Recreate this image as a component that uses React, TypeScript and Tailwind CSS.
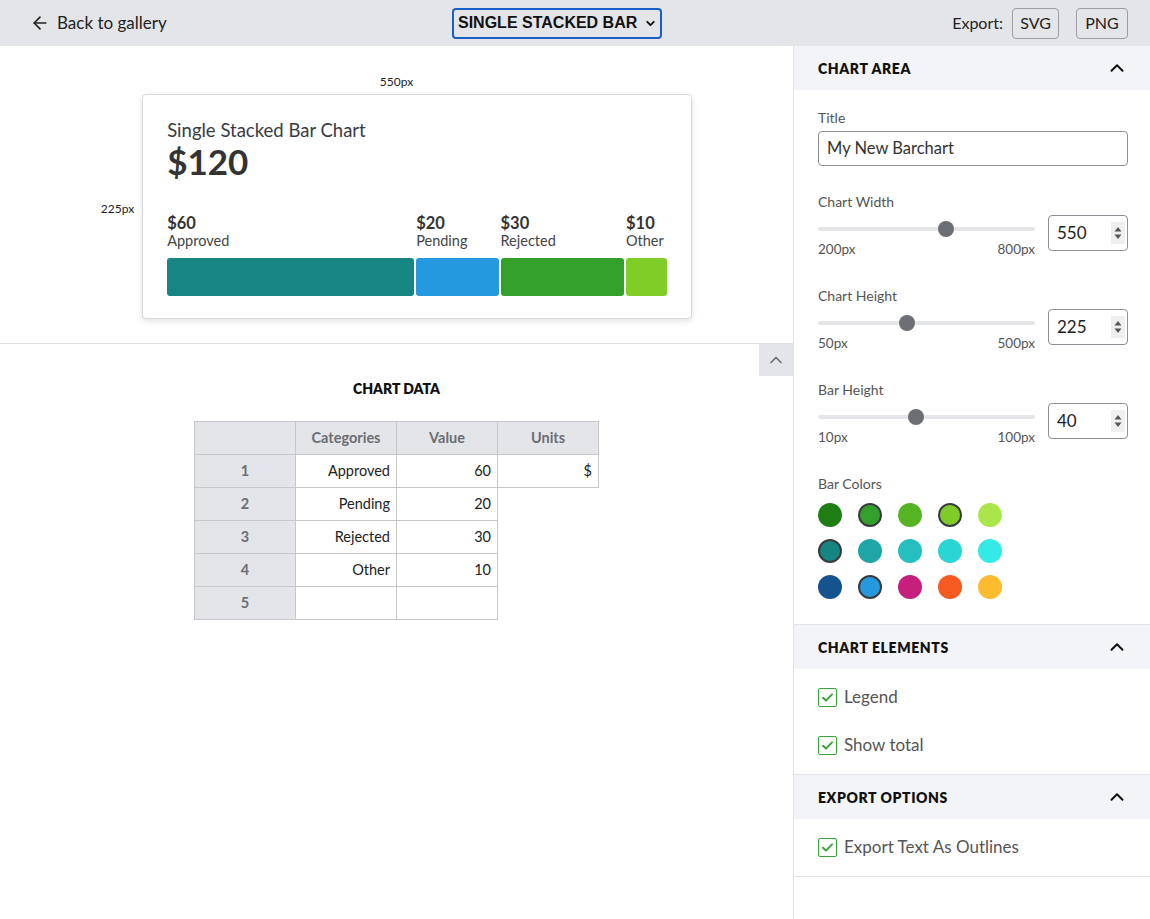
import { ArrowLeft, ChevronDown, ChevronUp } from 'lucide-react'

const segments = [
    { label: 'Approved', value: 60, color: '#178582' },
    { label: 'Pending', value: 20, color: '#2499e0' },
    { label: 'Rejected', value: 30, color: '#34a02c' },
    { label: 'Other', value: 10, color: '#80cd28' },
]

const palette = [
    ['#1e7e14', '#34a02c', '#56b324', '#7fcc28', '#aae64a'],
    ['#158582', '#1fa5a5', '#26bfbf', '#29d5d5', '#35eae6'],
    ['#15538f', '#2499e0', '#c71f7c', '#f65a21', '#fdbc30'],
]
const selected = ['#34a02c', '#7fcc28', '#158582', '#2499e0']

const font = { fontFamily: 'Lato, "Noto Sans", sans-serif' }

const SectionHeader = ({ title = '' }) => (
    <div className="flex h-[44px] items-center justify-between bg-[#f3f4f7] pl-6 pr-[24px]">
        <span className="text-[14px] font-extrabold tracking-[0.6px] text-[#111]">{title}</span>
        <ChevronUp size={22} strokeWidth={2.2} className="text-[#111]" />
    </div>
)

const NumberBox = ({ value = '' }) => (
    <div className="flex h-[36px] w-[80px] shrink-0 items-center justify-between rounded-[4px] border border-[#8d9096] pl-2 pr-[2px]">
        <span className="text-[17px] text-[#222]">{value}</span>
        <div className="flex h-[22px] w-[14px] items-center justify-center bg-[#efefef]">
            <svg width="8" height="14" viewBox="0 0 8 14">
                <path d="M4 1 L7.5 5.5 L0.5 5.5 Z" fill="#555" />
                <path d="M4 13 L7.5 8.5 L0.5 8.5 Z" fill="#555" />
            </svg>
        </div>
    </div>
)

const SliderRow = ({ label = '', min = '', max = '', value = '', pct = 0 }) => (
    <div>
        <div className="h-[20px] text-[14px] leading-[20px] text-[#555]">{label}</div>
        <div className="mt-[3px] flex gap-[13px]">
            <div className="w-[217px]">
                <div className="relative mt-[12px] h-[4px] rounded-full bg-[#e4e5e9]">
                    <div
                        className="absolute top-[-6px] h-[16px] w-[16px] -translate-x-1/2 rounded-full bg-[#6b6e73]"
                        style={{ left: `${pct}%` }}
                    />
                </div>
                <div className="mt-[10px] flex justify-between text-[13.5px] leading-[16px] text-[#555]">
                    <span>{min}</span>
                    <span>{max}</span>
                </div>
            </div>
            <NumberBox value={value} />
        </div>
    </div>
)

const CheckItem = ({ label = '' }) => (
    <div className="flex h-[24px] items-center gap-[7px]">
        <div className="flex h-[19px] w-[19px] items-center justify-center rounded-[2px] border border-[#3aa537]">
            <svg width="13" height="13" viewBox="0 0 13 13">
                <path d="M2 6.8 L5 9.6 L11 3.4" fill="none" stroke="#3aa537" strokeWidth="2" strokeLinecap="round" strokeLinejoin="round" />
            </svg>
        </div>
        <span className="text-[17px] text-[#555]">{label}</span>
    </div>
)

const ChartCard = () => {
    const total = segments.reduce((s, x) => s + x.value, 0)
    return (
        <div className="h-[225px] w-[550px] rounded-[4px] border border-[#d8d9dd] bg-white px-6 pt-[23px] shadow-[0_2px_6px_rgba(0,0,0,0.12)]">
            <div className="text-[18.5px] leading-[24px] text-[#3a3b3f]">Single Stacked Bar Chart</div>
            <div className="text-[35px] font-bold leading-[38px] text-[#333]">${total}</div>
            <div className="mt-[34px] flex gap-[2px]">
                {segments.map((s) => (
                    <div key={s.label} className="min-w-0 whitespace-nowrap" style={{ flex: `${s.value} 1 0` }}>
                        <div className="text-[16.5px] font-bold leading-[18px] text-[#333]">${s.value}</div>
                        <div className="text-[14.5px] leading-[17px] text-[#444]">{s.label}</div>
                    </div>
                ))}
            </div>
            <div className="mt-[9px] flex h-[38px] gap-[2px]">
                {segments.map((s) => (
                    <div key={s.label} className="rounded-[3px]" style={{ flex: `${s.value} 1 0`, background: s.color }} />
                ))}
            </div>
        </div>
    )
}

const rows = [
    ['Approved', '60', '$'],
    ['Pending', '20'],
    ['Rejected', '30'],
    ['Other', '10'],
    ['', ''],
]

const DataTable = () => {
    const cell = 'h-[33px] w-[101px] border border-[#c5c7cb]'
    return (
        <table className="mx-auto border-collapse text-[14.5px]">
            <thead>
                <tr>
                    <th className={`${cell} bg-[#e4e5e9]`} />
                    {['Categories', 'Value', 'Units'].map((h) => (
                        <th key={h} className={`${cell} bg-[#e4e5e9] font-bold text-[#6b6e73]`}>{h}</th>
                    ))}
                </tr>
            </thead>
            <tbody>
                {rows.map((r, i) => (
                    <tr key={i}>
                        <td className={`${cell} bg-[#e4e5e9] text-center font-bold text-[#6b6e73]`}>{i + 1}</td>
                        {r.map((c, j) => (
                            <td key={j} className={`${cell} px-[6px] text-right text-[#222]`}>{c}</td>
                        ))}
                    </tr>
                ))}
            </tbody>
        </table>
    )
}

export default function App() {
    return (
        <div className="flex h-[919px] w-[1150px] flex-col overflow-hidden bg-white" style={font}>
            <header className="flex h-[46px] shrink-0 items-center bg-[#e4e5e9] pl-[30px] pr-[22px]">
                <div className="flex w-[422px] items-center gap-[7px] text-[17px] text-[#222]">
                    <ArrowLeft size={20} strokeWidth={2} />
                    <span>Back to gallery</span>
                </div>
                <div
                    className="flex h-[31px] w-[210px] items-center justify-between whitespace-nowrap rounded-[4px] border-2 border-[#1a5fc8] pl-[4px] pr-[3px] text-[16px] font-bold text-[#111]"
                    style={{ fontFamily: '"Liberation Sans", Arial, sans-serif' }}
                >
                    <span>SINGLE STACKED BAR</span>
                    <ChevronDown size={13} strokeWidth={3.5} />
                </div>
                <div className="flex flex-1 items-center justify-end gap-[9px] text-[16px] text-[#222]">
                    <span>Export:</span>
                    <button className="h-[31px] w-[47px] rounded-[4px] border border-[#9a9ca1] text-[16px]">SVG</button>
                    <button className="ml-[8px] h-[31px] w-[52px] rounded-[4px] border border-[#9a9ca1] text-[16px]">PNG</button>
                </div>
            </header>
            <div className="flex min-h-0 flex-1">
                <main className="w-[793px] shrink-0">
                    <div className="flex h-[298px] flex-col items-center border-b border-[#e2e3e6] pt-[29px]">
                        <div className="text-[12px] leading-[14px] text-[#222]">550px</div>
                        <div className="mt-[5px] flex items-center gap-[8px]">
                            <div className="mt-[4px] text-[12px] text-[#222]">225px</div>
                            <ChartCard />
                        </div>
                    </div>
                    <div className="flex justify-end">
                        <div className="flex h-[32px] w-[34px] items-center justify-center bg-[#e4e5e9] text-[#6b6e73]">
                            <ChevronUp size={20} strokeWidth={2} />
                        </div>
                    </div>
                    <div className="mt-[3px] text-center text-[14px] font-extrabold leading-[20px] text-[#111]">CHART DATA</div>
                    <div className="mt-[22px]">
                        <DataTable />
                    </div>
                </main>
                <aside className="flex-1 border-l border-[#e2e3e6]">
                    <SectionHeader title="CHART AREA" />
                    <div className="border-b border-[#e2e3e6] px-6 pb-[25px] pt-[18px]">
                        <div className="h-[20px] text-[14px] leading-[20px] text-[#555]">Title</div>
                        <div className="mt-[3px] flex h-[35px] items-center rounded-[4px] border border-[#8d9096] px-[8px] text-[16.5px] text-[#333]">
                            My New Barchart
                        </div>
                        <div className="mt-[26px] flex flex-col gap-[29px]">
                            <SliderRow label="Chart Width" min="200px" max="800px" value="550" pct={59} />
                            <SliderRow label="Chart Height" min="50px" max="500px" value="225" pct={41} />
                            <SliderRow label="Bar Height" min="10px" max="100px" value="40" pct={45} />
                            <div>
                                <div className="h-[20px] text-[14px] leading-[20px] text-[#555]">Bar Colors</div>
                                <div className="mt-[9px] flex flex-col gap-[12px]">
                                    {palette.map((row, i) => (
                                        <div key={i} className="flex gap-[16px]">
                                            {row.map((c) => (
                                                <div
                                                    key={c}
                                                    className={`h-[24px] w-[24px] rounded-full ${selected.includes(c) ? 'border-2 border-[#3a3b3f]' : ''}`}
                                                    style={{ background: c }}
                                                />
                                            ))}
                                        </div>
                                    ))}
                                </div>
                            </div>
                        </div>
                    </div>
                    <SectionHeader title="CHART ELEMENTS" />
                    <div className="flex flex-col gap-[24px] border-b border-[#e2e3e6] px-6 pb-[17px] pt-[16px]">
                        <CheckItem label="Legend" />
                        <CheckItem label="Show total" />
                    </div>
                    <SectionHeader title="EXPORT OPTIONS" />
                    <div className="border-b border-[#e2e3e6] px-6 pb-[17px] pt-[16px]">
                        <CheckItem label="Export Text As Outlines" />
                    </div>
                </aside>
            </div>
        </div>
    )
}
